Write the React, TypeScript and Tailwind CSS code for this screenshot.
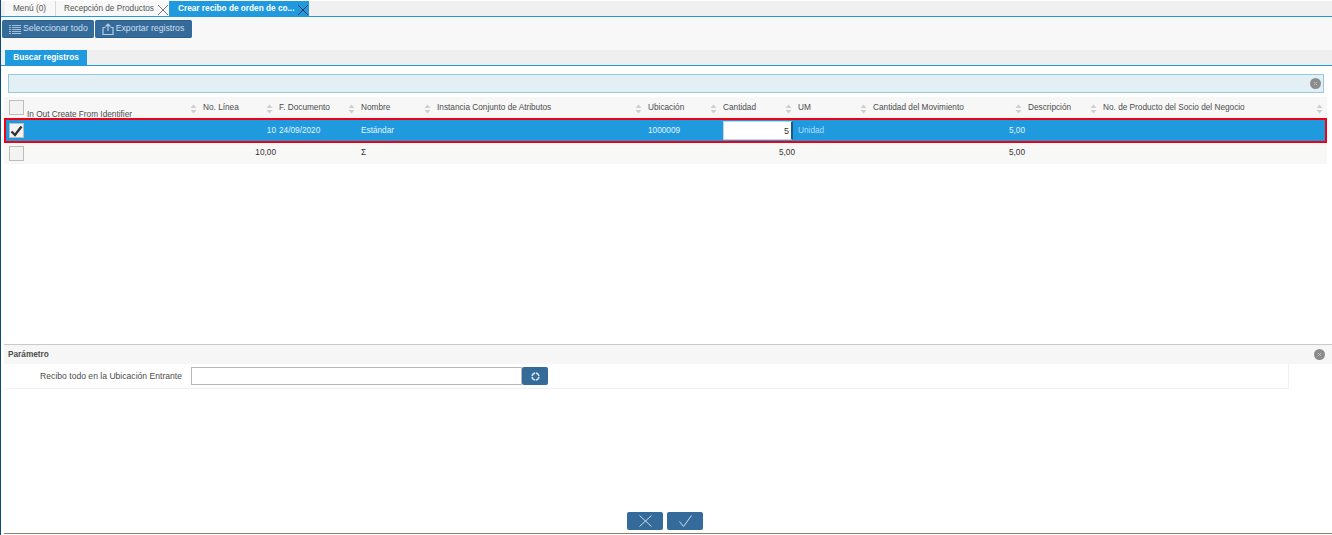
const cols = 'grid grid-cols-[195px_76px_82px_76px_211px_75px_75px_75px_155px_75px_226px]';

function SortIcon() {
  return (
    <svg width="7" height="10" viewBox="0 0 7 10" className="absolute right-[2px] top-[7px]">
      <path d="M3.5 0.5 L6.5 4 H0.5 Z" fill="#cfcfcf" />
      <path d="M3.5 9.5 L6.5 6 H0.5 Z" fill="#cfcfcf" />
    </svg>
  );
}

function HeaderCell({ label }: { label: string }) {
  return (
    <div className="relative h-full pl-[4px] pt-[5px] text-[#4c4c4c] whitespace-nowrap">
      {label}
      <SortIcon />
    </div>
  );
}

function CheckBox({ checked }: { checked?: boolean }) {
  return (
    <div className="w-[15px] h-[15px] bg-[#f3f3f3] border border-[#bdbdbd] flex items-center justify-center">
      {checked && (
        <svg width="13" height="12" viewBox="0 0 13 12">
          <path d="M1.5 6.5 L5 10 L11.5 1.5" fill="none" stroke="#333333" strokeWidth="2.4" />
        </svg>
      )}
    </div>
  );
}

function CloseDot({ className }: { className: string }) {
  return (
    <div className={`w-[11px] h-[11px] rounded-full bg-[#8c8c8c] flex items-center justify-center ${className}`}>
      <svg width="5" height="5" viewBox="0 0 5 5">
        <path d="M1 1 L4 4 M4 1 L1 4" stroke="#bdbdbd" strokeWidth="1" />
      </svg>
    </div>
  );
}

function TabClose({ color }: { color: string }) {
  return (
    <svg width="10" height="10" viewBox="0 0 10 10" className="ml-auto mr-[1px] mt-[2px] shrink-0">
      <path d="M0 0 L10 10 M10 0 L0 10" stroke={color} strokeWidth="1" />
    </svg>
  );
}

function ToolButton({ icon, label, className }: { icon: React.ReactNode; label: string; className: string }) {
  return (
    <div className={`h-[18px] pl-[7px] rounded-[2px] bg-[#346b9b] border-y border-[#2c5f8c] text-[#d3dfe9] text-[8.7px] flex items-center gap-[2px] whitespace-nowrap ${className}`}>
      {icon}
      {label}
    </div>
  );
}

export default function App() {
  return (
    <div className="w-[1332px] h-[535px] overflow-hidden bg-white border-l border-[#0c4a7c] flex flex-col font-['Liberation_Sans',Arial,sans-serif] text-[8.25px]">
      {/* tabs */}
      <div className="h-[16px] mt-[1px] pl-[4px] bg-[#f0f0f0] border-b border-[#1f9ade] flex text-[#555555] shrink-0">
        <div className="w-[51px] pl-[8px] pt-[2px] bg-[#f8f8f8] border-r border-[#d8d8d8] whitespace-nowrap">Menú (0)</div>
        <div className="w-[113px] pl-[8px] pt-[2px] bg-[#f8f8f8] flex whitespace-nowrap">
          Recepción de Productos
          <TabClose color="#777777" />
        </div>
        <div className="w-[140px] pl-[9px] pt-[2px] bg-[#1f9ade] text-white font-bold flex whitespace-nowrap">
          Crear recibo de orden de co...
          <TabClose color="#1d3a52" />
        </div>
      </div>

      {/* toolbar */}
      <div className="h-[33px] pt-[3px] pl-[1px] bg-[#f8f8f8] flex gap-[1px] shrink-0">
        <ToolButton
          className="pr-[6px]"
          label="Seleccionar todo"
          icon={
            <svg width="12" height="11" viewBox="0 0 12 11">
              <path d="M3 1.5 H12 M3 3.5 H12 M3 5.5 H12 M3 7.5 H12 M3 9.5 H12 M0 1.5 H2 M0 3.5 H2 M0 5.5 H2 M0 7.5 H2 M0 9.5 H2" stroke="#a9c0d3" strokeWidth="1" />
            </svg>
          }
        />
        <ToolButton
          className="pr-[8px]"
          label="Exportar registros"
          icon={
            <svg width="12" height="12" viewBox="0 0 12 12">
              <path d="M1 4.5 H3.5 M8.5 4.5 H11 V11.5 H1 V4.5 M6 8 V1 M3.5 3.5 L6 1 L8.5 3.5" fill="none" stroke="#b9ccdb" strokeWidth="1.2" />
            </svg>
          }
        />
      </div>

      {/* section tab */}
      <div className="h-[16px] pl-[4px] bg-[#efefef] border-b border-[#1f9ade] flex shrink-0">
        <div className="w-[82px] pt-[2px] text-center bg-[#1f9ade] text-white font-bold">Buscar registros</div>
      </div>

      {/* message bar */}
      <div className="relative mt-[8px] ml-[7px] w-[1316px] h-[19px] bg-[#e2eff4] border border-[#97c9d8] shrink-0">
        <CloseDot className="absolute right-[2px] top-[3px]" />
      </div>

      {/* table */}
      <div className="mt-[4px] ml-[3px] w-[1323px] text-[#4c4c4c] shrink-0">
        <div className={`${cols} h-[21px] bg-[#f7f7f7]`}>
          <div className="relative h-full pl-[5px] pt-[3px]">
            <CheckBox />
            <span className="absolute left-[23px] top-[12px] whitespace-nowrap">In Out Create From Identifier</span>
            <SortIcon />
          </div>
          <HeaderCell label="No. Línea" />
          <HeaderCell label="F. Documento" />
          <HeaderCell label="Nombre" />
          <HeaderCell label="Instancia Conjunto de Atributos" />
          <HeaderCell label="Ubicación" />
          <HeaderCell label="Cantidad" />
          <HeaderCell label="UM" />
          <HeaderCell label="Cantidad del Movimiento" />
          <HeaderCell label="Descripción" />
          <HeaderCell label="No. de Producto del Socio del Negocio" />
        </div>

        <div className={`${cols} h-[25px] bg-[#1f9ade] outline-2 -outline-offset-2 outline-[#f00010] text-[#e6f3fb] items-center`}>
          <div className="pl-[5px]">
            <CheckBox checked />
          </div>
          <div className="text-right -mr-[1px] pt-[1px]">10</div>
          <div className="pl-[4px] pt-[1px]">24/09/2020</div>
          <div className="pl-[4px] pt-[1px]">Estándar</div>
          <div />
          <div className="pl-[4px] pt-[1px]">1000009</div>
          <div className="pl-[4px]">
            <div className="w-[70px] h-[19px] bg-white border border-[#c4d4de] border-r-2 border-r-[#1d5a8a] text-[#333333] text-right pr-[2px] pt-[1px] leading-[17px] text-[9px]">5</div>
          </div>
          <div className="pl-[4px] pt-[2px] text-[#b0def8]">Unidad</div>
          <div className="text-right -mr-[1px] pt-[1px]">5,00</div>
          <div />
          <div />
        </div>

        <div className={`${cols} h-[21px] bg-[#f8f8f7] text-[#333333] items-center`}>
          <div className="pl-[5px]">
            <CheckBox />
          </div>
          <div className="text-right -mr-[1px]">10,00</div>
          <div />
          <div className="pl-[4px]">Σ</div>
          <div />
          <div />
          <div className="text-right -mr-[1px]">5,00</div>
          <div />
          <div className="text-right -mr-[1px]">5,00</div>
          <div />
          <div />
        </div>
      </div>

      {/* parameters */}
      <div className="mt-[180px] ml-[3px] w-[1328px] border-t border-[#c9c9c9] h-[20px] bg-[#f6f6f6] relative pl-[4px] pt-[4px] font-bold text-[#4c4c4c] shrink-0">
        Parámetro
        <CloseDot className="absolute right-[7px] top-[4px]" />
      </div>
      <div className="ml-[3px] w-[1285px] h-[25px] border-b border-r border-[#f0f0f0] flex items-start pt-[3px] text-[#4c4c4c] text-[8.6px] shrink-0">
        <div className="w-[178px] text-right pt-[3px]">Recibo todo en la Ubicación Entrante</div>
        <div className="ml-[9px] w-[331px] h-[18px] bg-white border border-[#b8b8b8]" />
        <div className="w-[26px] h-[18px] rounded-[2px] bg-[#346b9b] flex items-center justify-center">
          <svg width="11" height="11" viewBox="0 0 11 11">
            <circle cx="5.5" cy="5.5" r="3.4" fill="none" stroke="#d5e2ec" strokeWidth="1.7" />
            <path d="M5.5 1 V3 M5.5 8 V10 M1 5.5 H3 M8 5.5 H10" stroke="#346b9b" strokeWidth="0.8" />
          </svg>
        </div>
      </div>

      {/* actions */}
      <div className="mt-[123px] flex justify-center gap-[4px] pr-[3px] shrink-0">
        <div className="w-[36px] h-[18px] rounded-[2px] bg-[#346b9b] flex items-center justify-center">
          <svg width="13" height="12" viewBox="0 0 13 12">
            <path d="M0.5 0.5 L12.5 11.5 M12.5 0.5 L0.5 11.5" stroke="#cfdde9" strokeWidth="1" />
          </svg>
        </div>
        <div className="w-[36px] h-[18px] rounded-[2px] bg-[#346b9b] flex items-center justify-center">
          <svg width="13" height="12" viewBox="0 0 13 12">
            <path d="M0.5 6.5 L4.5 11.5 L12.5 0.5" fill="none" stroke="#cfdde9" strokeWidth="1" />
          </svg>
        </div>
      </div>
      <div className="mt-[3px] ml-[3px] h-[1px] bg-[#84846a] shrink-0" />
    </div>
  );
}
